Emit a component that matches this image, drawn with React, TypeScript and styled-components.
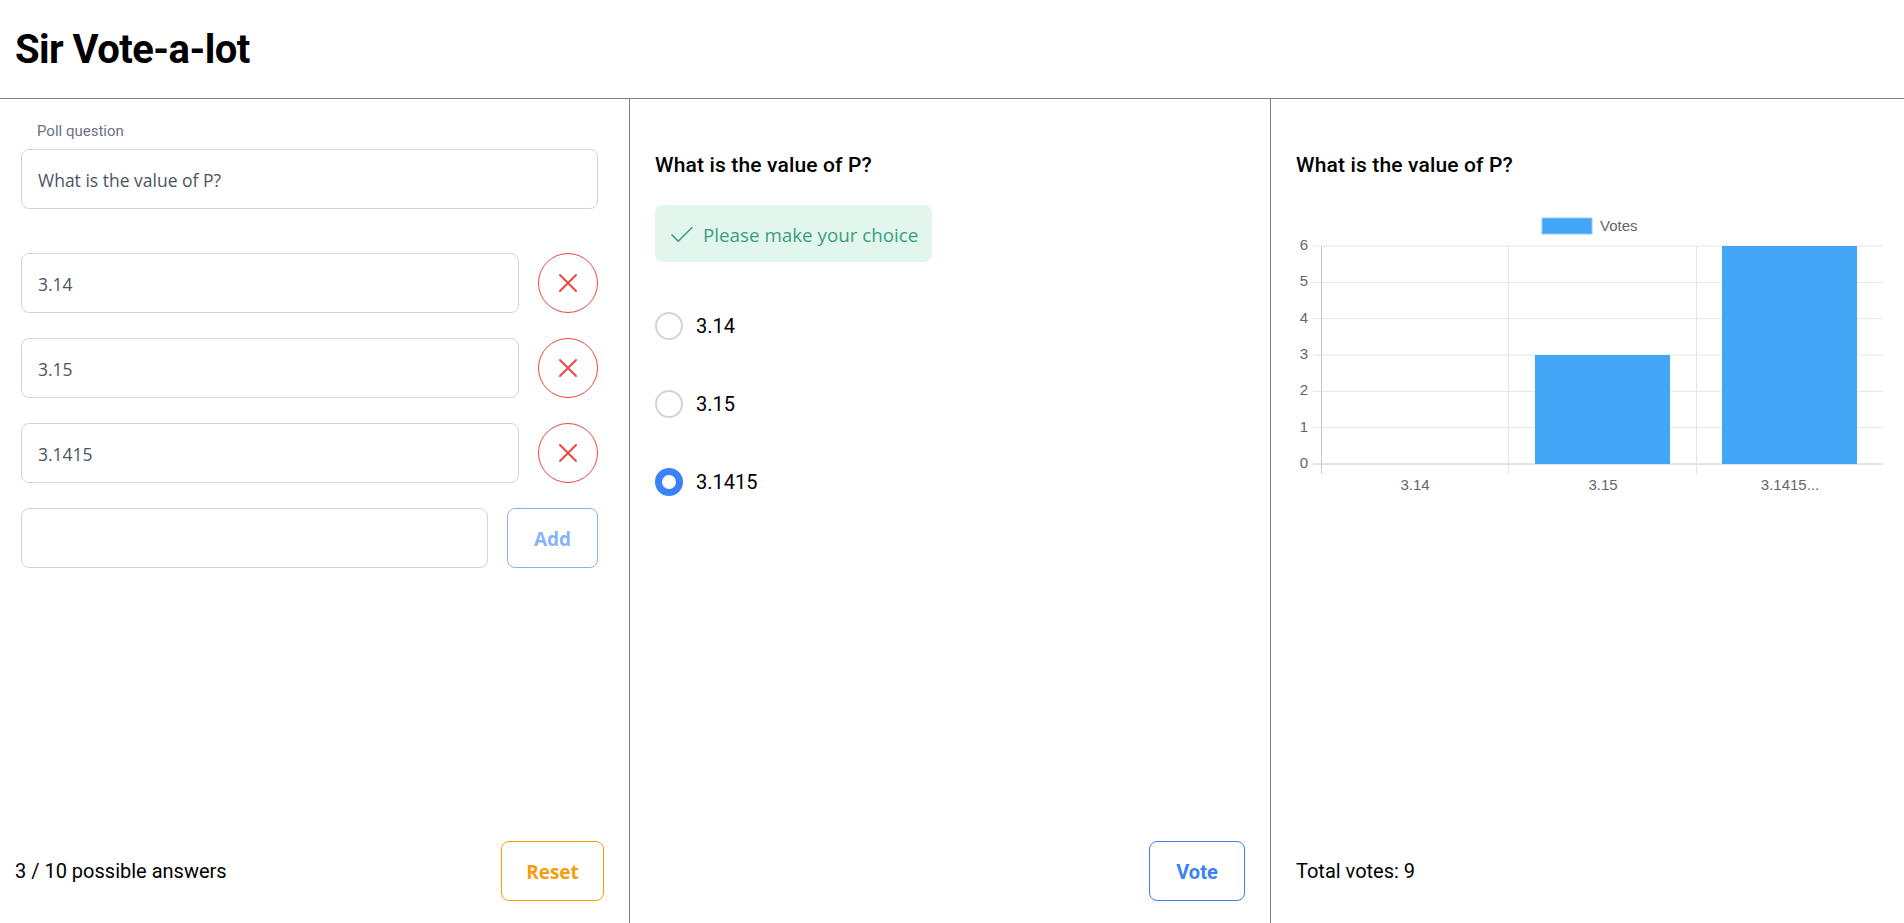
import styled, { createGlobalStyle } from 'styled-components';
import { Check, X } from 'lucide-react';

const answers = ['3.14', '3.15', '3.1415'];

const chart = {
  left: 51,
  right: 613,
  top: 56,
  bottom: 274,
  columns: [51, 238, 426],
};

const bars = [
  { x: 265, width: 135, votes: 3 },
  { x: 452, width: 135, votes: 6 },
];

const labels = [
  { x: 145, text: '3.14' },
  { x: 333, text: '3.15' },
  { x: 520, text: '3.1415...' },
];

const VoteChart = () => {
  const step = (chart.bottom - chart.top) / 6;
  return (
    <ChartSvg width="633" height="320" viewBox="0 190 633 320">
      <rect x="272" y="218" width="50" height="16" fill="#42a5f5" stroke="#90caf9" />
      <ChartText x="330" y="231">Votes</ChartText>
      {[0, 1, 2, 3, 4, 5, 6].map((n) => {
        const y = chart.bottom + 190 - n * step;
        return (
          <g key={n}>
            <line x1={chart.left - 8} x2={chart.right} y1={y} y2={y} stroke={n === 0 ? '#c8c8c8' : '#e6e6e6'} />
            <ChartText x="38" y={y + 4} textAnchor="end">{n}</ChartText>
          </g>
        );
      })}
      {chart.columns.map((x, i) => (
        <line key={x} x1={x + 0.5} x2={x + 0.5} y1={chart.top + 190} y2={chart.bottom + 200} stroke={i === 0 ? '#c8c8c8' : '#e6e6e6'} />
      ))}
      {bars.map((b) => (
        <rect key={b.x} x={b.x} y={chart.bottom + 190 - b.votes * step} width={b.width} height={b.votes * step} fill="#42a5f5" />
      ))}
      {labels.map((l) => (
        <ChartText key={l.text} x={l.x} y="490" textAnchor="middle">{l.text}</ChartText>
      ))}
    </ChartSvg>
  );
};

const App = () => {
  return (
    <Page>
      <GlobalStyle />
      <Header>
        <Title>Sir Vote-a-lot</Title>
      </Header>
      <Columns>
        <Column>
          <Form>
            <FieldLabel>Poll question</FieldLabel>
            <TextInput defaultValue="What is the value of P?" />
            <AnswerList>
              {answers.map((answer) => (
                <AnswerRow key={answer}>
                  <TextInput defaultValue={answer} />
                  <RemoveButton>
                    <X size={32} strokeWidth={1.5} />
                  </RemoveButton>
                </AnswerRow>
              ))}
              <AnswerRow>
                <TextInput />
                <OutlineButton $color="#3b82f6" $faded>Add</OutlineButton>
              </AnswerRow>
            </AnswerList>
          </Form>
          <Footer>
            <FooterText>3 / 10 possible answers</FooterText>
            <OutlineButton $color="#f59e0b" $width={103}>Reset</OutlineButton>
          </Footer>
        </Column>
        <Column>
          <Section>
            <Question>What is the value of P?</Question>
            <Notice>
              <Check size={30} strokeWidth={1.3} />
              Please make your choice
            </Notice>
            <Choices>
              {answers.map((answer, i) => (
                <Choice key={answer}>
                  <Radio type="radio" name="choice" defaultChecked={i === 2} />
                  {answer}
                </Choice>
              ))}
            </Choices>
          </Section>
          <Footer>
            <span />
            <VoteButton $color="#3b82f6" $width={96}>Vote</VoteButton>
          </Footer>
        </Column>
        <Column>
          <Section>
            <Question>What is the value of P?</Question>
            <VoteChart />
          </Section>
          <Footer>
            <TotalText>Total votes: 9</TotalText>
            <FooterSpacer />
          </Footer>
        </Column>
      </Columns>
    </Page>
  );
};

export default App;

const GlobalStyle = createGlobalStyle`
  html, body {
    margin: 0;
    height: 100%;
    overflow: hidden;
    background: #fff;
  }
  * {
    box-sizing: border-box;
  }
`;

const Page = styled.div`
  display: flex;
  flex-direction: column;
  height: 923px;
  font-family: Roboto, sans-serif;
  color: #000;
`;

const Header = styled.header`
  display: flex;
  align-items: center;
  height: 99px;
  padding-left: 15px;
  border-bottom: 1px solid #808080;
`;

const Title = styled.h1`
  margin: 0;
  font-size: 40px;
  font-weight: 700;
  letter-spacing: -0.55px;
`;

const Columns = styled.main`
  flex: 1;
  display: grid;
  grid-template-columns: 630px 641px 1fr;
`;

const Column = styled.section`
  display: flex;
  flex-direction: column;
  justify-content: space-between;
  border-right: 1px solid #808080;

  &:last-child {
    border-right: none;
  }
`;

const Form = styled.form`
  display: flex;
  flex-direction: column;
  padding: 25px 31px 0 21px;
`;

const FieldLabel = styled.label`
  margin: 0 0 11px 16px;
  font-size: 15px;
  line-height: 14px;
  color: #6b7280;
`;

const TextInput = styled.input`
  flex: none;
  width: 100%;
  height: 60px;
  padding: 2px 16px 0;
  border: 1px solid #d1d5db;
  border-radius: 8px;
  outline: none;
  background: #fff;
  font-family: 'Open Sans', sans-serif;
  font-size: 17.5px;
  color: #4b5563;
`;

const AnswerList = styled.div`
  display: flex;
  flex-direction: column;
  gap: 25px;
  margin-top: 44px;
`;

const AnswerRow = styled.div`
  display: flex;
  gap: 19px;

  ${TextInput} {
    flex: 1;
    min-width: 0;
  }
`;

const RemoveButton = styled.button`
  flex: none;
  display: flex;
  align-items: center;
  justify-content: center;
  width: 60px;
  height: 60px;
  padding: 0;
  border: 1px solid #ef4444;
  border-radius: 50%;
  background: #fff;
  color: #ef4444;
`;

const OutlineButton = styled.button<{ $color: string; $faded?: boolean; $width?: number }>`
  flex: none;
  width: ${({ $width }) => $width ?? 91}px;
  height: 60px;
  padding: 2px 0 0;
  border: 1px solid ${({ $color }) => $color};
  border-radius: 8px;
  background: #fff;
  font-family: 'Open Sans', sans-serif;
  font-size: 19px;
  font-weight: 700;
  color: ${({ $color }) => $color};
  opacity: ${({ $faded }) => ($faded ? 0.6 : 1)};
`;

const VoteButton = styled(OutlineButton)`
  font-family: Roboto, sans-serif;
  font-size: 20px;
`;

const Footer = styled.footer`
  display: flex;
  align-items: center;
  justify-content: space-between;
  height: 60px;
  margin-bottom: 22px;
  padding: 0 25px 0 15px;
`;

const FooterText = styled.span`
  font-size: 20px;
`;

const TotalText = styled.span`
  padding-left: 10px;
  font-size: 20px;
`;

const FooterSpacer = styled.span`
  width: 96px;
`;

const Section = styled.div`
  display: flex;
  flex-direction: column;
  align-items: flex-start;
  padding: 54px 0 0 25px;
`;

const Question = styled.h2`
  margin: 0;
  font-size: 21px;
  line-height: 24px;
  font-weight: 500;
  letter-spacing: 0.15px;
`;

const Notice = styled.div`
  display: flex;
  align-items: center;
  gap: 6px;
  height: 57px;
  margin-top: 28px;
  padding: 2px 14px 0 12px;
  border-radius: 8px;
  background: #e3f6ee;
  font-family: 'Open Sans', sans-serif;
  font-size: 18.8px;
  color: #38a17c;
`;

const Choices = styled.div`
  display: flex;
  flex-direction: column;
  gap: 50px;
  margin-top: 50px;
`;

const Choice = styled.label`
  display: flex;
  align-items: center;
  gap: 13px;
  font-size: 20px;
`;

const Radio = styled.input`
  appearance: none;
  width: 28px;
  height: 28px;
  margin: 0;
  border: 2px solid #d1d5db;
  border-radius: 50%;
  background: #fff;

  &:checked {
    border: 7px solid #3b82f6;
  }
`;

const ChartSvg = styled.svg`
  display: block;
  margin: 13px 0 0 -26px;
  overflow: visible;
`;

const ChartText = styled.text`
  font-family: 'Liberation Sans', sans-serif;
  font-size: 15px;
  fill: #666;
`;
